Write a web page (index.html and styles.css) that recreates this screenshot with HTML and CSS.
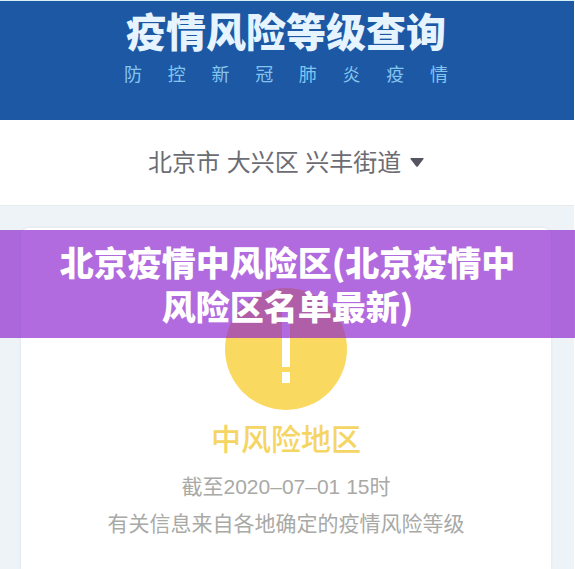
FILE: index.html
```html
<!DOCTYPE html>
<html lang="zh-CN">
<head>
	<meta charset="utf-8">
	<title>疫情风险等级查询</title>
	<meta name="viewport" content="width=device-width, initial-scale=1">
	<link rel="stylesheet" href="styles.css">
</head>
<body>
	<div class="page">
		<header class="header">
			<h1 class="title">疫情风险等级查询</h1>
			<p class="subtitle">防控新冠肺炎疫情</p>
		</header>

		<div class="location">
			<select class="locationSelect" aria-label="地区">
				<option>北京市 大兴区 兴丰街道</option>
			</select>
			<svg class="arrow" width="14" height="9" viewBox="0 0 14 9"><path d="M1 0h12q1 0 .5 1L8 8.3q-1 1-2 0L.5 1Q0 0 1 0z" fill="#55555f"/></svg>
		</div>

		<main class="content">
			<section class="card">
				<svg class="riskIcon" width="122" height="122" viewBox="0 0 122 122">
					<circle cx="61" cy="61" r="61" fill="#fad961"/>
					<path d="M57 24h8v55h-8zM57 84h8v11h-8z" fill="#fff"/>
				</svg>
				<h2 class="riskLevel">中风险地区</h2>
				<p class="note">截至2020–07–01 15时</p>
				<p class="note">有关信息来自各地确定的疫情风险等级</p>
			</section>
		</main>
	</div>

	<div class="banner">北京疫情中风险区(北京疫情中风险区名单最新)</div>
</body>
</html>
```
FILE: styles.css
```css
* {
	box-sizing: border-box;
}

body {
	margin: 0;
	background: #fff;
	font-family: "Liberation Sans", "Noto Sans CJK SC", sans-serif;
}

h1, h2, p {
	margin: 0;
}

.page {
	display: flex;
	flex-direction: column;
	min-height: 100vh;
	margin-right: 1px;
}

.header {
	display: flex;
	flex-direction: column;
	align-items: center;
	height: 120px;
	padding: 8px 2px 0 0;
	border-top: 1px solid #d5f0f5;
	background: #1c58a4;
}

.title {
	color: #e6f4ff;
	font-size: 40px;
	font-weight: 900;
	line-height: 48px;
}

.subtitle {
	width: 324px;
	margin-top: 4px;
	color: #84c5f0;
	font-size: 18px;
	line-height: 28px;
	text-align: justify;
	text-align-last: justify;
}

.location {
	display: flex;
	align-items: center;
	justify-content: center;
	gap: 8px;
	height: 85px;
	padding-right: 2px;
}

.locationSelect {
	padding: 0;
	border: none;
	background: none;
	color: #6c6c74;
	font: inherit;
	font-size: 24px;
	line-height: 36px;
	appearance: none;
}

.content {
	display: flex;
	flex: 1;
	padding: 22px 23px 0 21px;
	border-top: 1px solid #e6ebed;
	background: #edf3f7;
}

.card {
	flex: 1;
	padding: 60px 0 20px;
	border-radius: 8px 8px 0 0;
	background: #fff;
	box-shadow: 0 0 3px #dde2e5;
	text-align: center;
}

.riskIcon {
	display: block;
	margin: 0 auto;
}

.riskLevel {
	margin: 8px 0 6px;
	color: #f5d563;
	font-size: 30px;
	font-weight: 500;
	line-height: 44px;
}

.note {
	color: #a9a9a6;
	font-size: 21px;
	line-height: 37px;
}

/* caption strip over the page */
.banner {
	position: absolute;
	top: 230px;
	left: 0;
	right: 0;
	padding: 10px 56px;
	background: rgba(137, 28, 204, .65);
	color: #fff;
	font-family: "Noto Sans CJK SC", sans-serif;
	font-size: 34px;
	font-weight: 900;
	line-height: 44px;
	text-align: center;
	word-break: break-all;
}
```
